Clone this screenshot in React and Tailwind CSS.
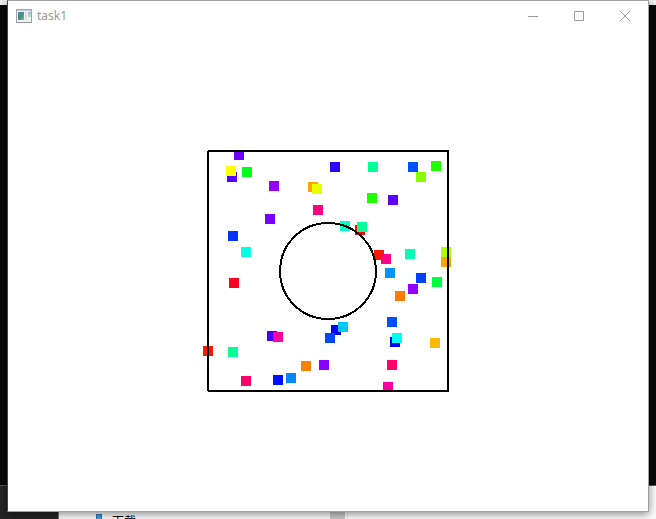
import React from "react";

const SIZE = 10;

// x, y, fill; later particles are painted over earlier ones
const particles = [
  [234, 150, "#7000ff"], [227, 172, "#5500ff"], [226, 166, "#ffff00"],
  [242, 167, "#00ff18"], [269, 181, "#9900ff"], [308, 182, "#ffa500"],
  [312, 184, "#e8ff00"], [313, 205, "#ff007f"], [265, 214, "#7700ff"],
  [228, 231, "#0033ff"], [241, 247, "#00ffe5"], [330, 162, "#3000ff"],
  [368, 162, "#00ff95"], [408, 162, "#0050ff"], [431, 161, "#20ff00"],
  [416, 172, "#88ff00"], [367, 193, "#20ff00"], [388, 195, "#6000ff"],
  [340, 221, "#00ffc8"], [355, 225, "#ff0000"], [357, 222, "#00ff95"],
  [374, 250, "#ff1800"], [381, 254, "#ff0088"], [405, 249, "#00ffb0"],
  [441, 247, "#b0ff00"], [441, 257, "#ffa500"], [385, 268, "#0095ff"],
  [229, 278, "#ff0022"], [203, 346, "#ff1800"], [228, 347, "#00ff95"],
  [267, 331, "#4800ff"], [273, 332, "#ff00a0"], [241, 376, "#ff006a"],
  [273, 375, "#0010ff"], [286, 373, "#0088ff"], [301, 361, "#ff8000"],
  [319, 360, "#8800ff"], [416, 273, "#0040ff"], [432, 277, "#00ff40"],
  [408, 284, "#9500ff"], [395, 291, "#ff7800"], [387, 317, "#0050ff"],
  [390, 337, "#0000ff"], [392, 333, "#00fff0"], [430, 338, "#ffb800"],
  [387, 360, "#ff006a"], [383, 382, "#ff00a0"], [331, 325, "#0000ff"],
  [338, 322, "#00c8ff"], [325, 333, "#0048ff"],
];

function Scene() {
  return (
    <svg
      className="block h-full w-full"
      viewBox="8 31 640 480"
      shapeRendering="crispEdges"
      role="img"
      aria-label="Particles in a box around a circle"
    >
      {particles.map(([x, y, fill]) => (
        <rect key={`${x}-${y}`} x={x} y={y} width={SIZE} height={SIZE} fill={fill} />
      ))}
      <rect x="208" y="151" width="240" height="240" fill="none" stroke="#000" strokeWidth="2" strokeLinejoin="bevel" />
      <circle cx="328" cy="271" r="48" fill="none" stroke="#000" strokeWidth="2" />
    </svg>
  );
}

function AppIcon() {
  return (
    <svg className="h-[14px] w-4" viewBox="0 0 16 14" aria-hidden="true">
      <defs>
        <linearGradient id="pane" x1="0" y1="0" x2="1" y2="1">
          <stop offset="0" stopColor="#5085b0" />
          <stop offset="0.5" stopColor="#458b8c" />
          <stop offset="1" stopColor="#79bb88" />
        </linearGradient>
      </defs>
      <rect x="0.5" y="0.5" width="15" height="13" fill="#f0f1f2" stroke="#a2a7ad" />
      <path d="M1 1.5h14" stroke="#c5cbd2" />
      <rect x="2" y="3" width="6" height="8" fill="url(#pane)" />
      <rect x="9" y="3" width="2" height="8" fill="#dedfe0" />
      <rect x="12" y="3" width="3" height="5" fill="#b4d6c7" />
      <rect x="12" y="3" width="3" height="2" fill="#9bbdd8" />
      <path d="M0 13.5h16" stroke="#8f9499" />
    </svg>
  );
}

const controls = [
  { label: "Minimize", path: "M0 5.5h10" },
  { label: "Maximize", path: "M0.5 0.5h9v9h-9z" },
  { label: "Close", path: "M0 0l10 10M10 0L0 10" },
];

function TitleBar() {
  return (
    <header className="flex h-[30px] shrink-0 items-center justify-between">
      <div className="flex items-center gap-[5px] pl-2">
        <AppIcon />
        <h1 className="font-['Noto_Sans',sans-serif] text-[12px] leading-4 text-[#999]">task1</h1>
      </div>
      <div className="flex h-full">
        {controls.map(({ label, path }) => (
          <button key={label} type="button" aria-label={label} className="flex h-full w-[46px] items-center justify-center">
            <svg className="size-[10px]" viewBox="0 0 10 10" fill="none" stroke="#999" aria-hidden="true">
              <path d={path} />
            </svg>
          </button>
        ))}
      </div>
    </header>
  );
}

function Desktop() {
  return (
    <div className="absolute inset-0 flex flex-col">
      <div className="h-[5px] bg-[#f0f0f0]" />
      <div className="flex-1 border-b border-[#555] bg-[#0a0a0a]" />
      <div className="flex h-[33px]">
        <div className="w-[59px] border-r border-[#777] bg-[#242424]" />
        <div className="flex flex-1 items-end overflow-hidden bg-[#fafafa]">
          <div className="flex h-[5px] w-[271px] items-start gap-[10px] overflow-hidden pl-[37px]">
            <span className="h-[5px] w-[6px] border border-b-0 border-[#2f78b0] bg-[#3f99df]" />
            <span className="font-['Noto_Sans_CJK_SC',sans-serif] text-[12px] leading-[14px] text-black">下载</span>
          </div>
          <div className="h-full w-[15px] bg-[#c8c8c8]" />
          <div className="h-full w-[3px] border-r border-[#e8e8e8]" />
        </div>
      </div>
    </div>
  );
}

export default function App() {
  return (
    <div className="relative flex h-screen overflow-hidden">
      <Desktop />
      <main className="relative mx-[7px] mb-[7px] flex min-w-0 flex-1 flex-col border border-[#a0a0a0] border-l-[#444] bg-white shadow-[0_2px_8px_rgba(0,0,0,0.45)]">
        <TitleBar />
        <div className="min-h-0 flex-1">
          <Scene />
        </div>
      </main>
    </div>
  );
}
